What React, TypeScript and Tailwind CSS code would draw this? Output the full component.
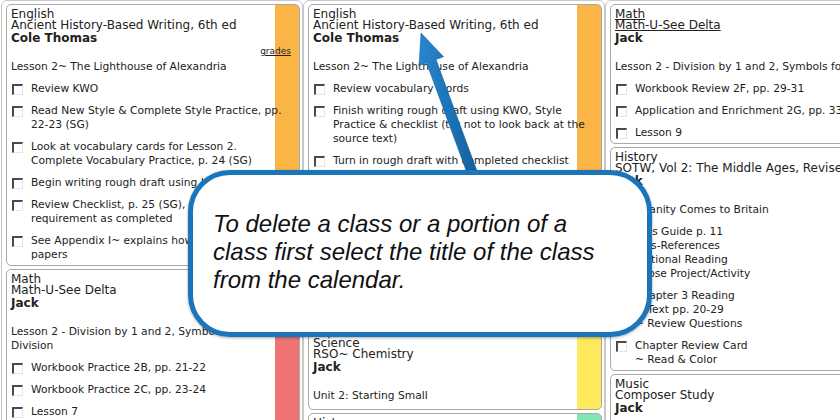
import React from "react"

type Item = { text: string; plain?: boolean }

type CardData = {
  subject: string
  course: string
  student: string
  link?: boolean
  grades?: boolean
  lesson: string
  items: Item[]
  strip: string
  pb?: string
}

const col1: CardData[] = [
  {
    subject: "English",
    course: "Ancient History-Based Writing, 6th ed",
    student: "Cole Thomas",
    grades: true,
    lesson: "Lesson 2~ The Lighthouse of Alexandria",
    strip: "bg-[linear-gradient(to_left,#fbb446_24px,#ffffff_24px)]",
    items: [
      { text: "Review KWO" },
      { text: "Read New Style & Complete Style Practice, pp.\n22-23 (SG)" },
      { text: "Look at vocabulary cards for Lesson 2.\nComplete Vocabulary Practice, p. 24 (SG)" },
      { text: "Begin writing rough draft using KWO" },
      { text: "Review Checklist, p. 25 (SG), check off each\nrequirement as completed" },
      { text: "See Appendix I~ explains how to format your\npapers" },
    ],
  },
  {
    subject: "Math",
    course: "Math-U-See Delta",
    student: "Jack",
    lesson: "Lesson 2 - Division by 1 and 2, Symbols for\nDivision",
    strip: "bg-[linear-gradient(to_left,#f07272_24px,#ffffff_24px)]",
    items: [
      { text: "Workbook Practice 2B, pp. 21-22" },
      { text: "Workbook Practice 2C, pp. 23-24" },
      { text: "Lesson 7" },
      { text: "Lesson 8" },
    ],
  },
]

const col2: CardData[] = [
  {
    subject: "English",
    course: "Ancient History-Based Writing, 6th ed",
    student: "Cole Thomas",
    lesson: "Lesson 2~ The Lighthouse of Alexandria",
    strip: "bg-[linear-gradient(to_left,#fbb446_24px,#ffffff_24px)]",
    items: [
      { text: "Review vocabulary words" },
      { text: "Finish writing rough draft using KWO, Style\nPractice & checklist (try not to look back at the\nsource text)" },
      { text: "Turn in rough draft with completed checklist" },
      { text: "Begin writing final draft using rough\ndraft and checklist" },
      { text: "Complete Style Practice, p. 26 (SG)" },
      { text: "Look at vocabulary cards for Lessons 1\nand 2. Take Vocabulary Quiz 1, p. 27\n(SG)" },
      { text: "Turn in final draft with completed\nchecklist; see Appendix I for grading\nhelp" },
    ],
  },
  {
    subject: "Science",
    course: "RSO~ Chemistry",
    student: "Jack",
    lesson: "Unit 2: Starting Small",
    strip: "bg-[linear-gradient(to_left,#fde95b_24px,#ffffff_24px)]",
    items: [],
    pb: "pb-[6px]",
  },
  {
    subject: "History",
    course: "SOTW, Vol 2: The Middle Ages",
    student: "Cole Thomas",
    lesson: "Chapter 2~ Christianity Comes to Britain",
    strip: "bg-[linear-gradient(to_left,#7fe6b4_24px,#ffffff_24px)]",
    items: [{ text: "Read Chapter 2" }],
  },
]

const col3: CardData[] = [
  {
    subject: "Math",
    course: "Math-U-See Delta",
    student: "Jack",
    link: true,
    lesson: "Lesson 2 - Division by 1 and 2, Symbols for Division",
    strip: "bg-[linear-gradient(to_left,#f07272_24px,#ffffff_24px)]",
    items: [
      { text: "Workbook Review 2F, pp. 29-31" },
      { text: "Application and Enrichment 2G, pp. 33-35" },
      { text: "Lesson 9" },
    ],
  },
  {
    subject: "History",
    course: "SOTW, Vol 2: The Middle Ages, Revised Edition",
    student: "Jack",
    lesson: "Christianity Comes to Britain",
    strip: "bg-[linear-gradient(to_left,#7fe6b4_24px,#ffffff_24px)]",
    items: [
      { text: "Parent's Guide p. 11\n~ Cross-References\n~ Additional Reading\n~ Choose Project/Activity", plain: true },
      { text: "Chapter 3 Reading\n~ Text pp. 20-29\n~ Review Questions" },
      { text: "Chapter Review Card\n~ Read & Color" },
    ],
  },
  {
    subject: "Music",
    course: "Composer Study",
    student: "Jack",
    lesson: "Week 2~ Listen and Narrate",
    strip: "bg-[linear-gradient(to_left,#b79ce8_24px,#ffffff_24px)]",
    items: [],
  },
]

function Checkbox() {
  return <span className="mt-[2px] ml-[1px] mr-[8px] h-[11px] w-[11px] shrink-0 border-l-2 border-t-2 border-r border-b border-l-[#4a4a4a] border-t-[#4a4a4a] border-r-[#e4e4e4] border-b-[#e4e4e4]" />
}

function Card({ c }: { c: CardData }) {
  return (
    <div className={`rounded-[5px] border border-[#a9a9a9] pl-[4px] pr-[12px] pt-[4px] ${c.pb ?? "pb-[3px]"} ${c.strip}`}>
      <div className={`text-[12px] leading-[11px] ${c.link ? "underline" : ""}`}>
        <div>{c.subject}</div>
        <div className="whitespace-nowrap">{c.course}</div>
      </div>
      <div className="text-[12px] font-bold leading-[14px]">{c.student}</div>
      <div className="-mr-[4px] h-[12px] text-right text-[9px] leading-[12px]">
        {c.grades && <span className="underline">grades</span>}
      </div>
      <div className="mt-[3px] whitespace-pre text-[10.7px] leading-[14px]">{c.lesson}</div>
      {c.items.length > 0 && (
        <div className="mt-[8px] flex flex-col gap-[8px]">
          {c.items.map((it, i) => (
            <div key={i} className="flex">
              {!it.plain && <Checkbox />}
              <div className="whitespace-pre text-[10.7px] leading-[14px]">{it.text}</div>
            </div>
          ))}
        </div>
      )}
    </div>
  )
}

function Column({ cards }: { cards: CardData[] }) {
  return (
    <div className="flex w-[302px] shrink-0 flex-col gap-[3px] rounded-[6px] border border-[#c8c8c8] pl-[4px] pr-[2px] pt-[3px]">
      {cards.map((c, i) => (
        <Card key={i} c={c} />
      ))}
    </div>
  )
}

export default function App() {
  return (
    <div className="relative h-[420px] w-[840px] overflow-hidden bg-white font-['DejaVu_Sans',Verdana,sans-serif] text-[#222]">
      <div className="flex pl-[1px]">
        <Column cards={col1} />
        <Column cards={col2} />
        <Column cards={col3} />
      </div>

      {/* arrow pointing at the class title */}
      <svg className="pointer-events-none absolute left-0 top-0" width="840" height="420" viewBox="0 0 840 420">
        <defs>
          <linearGradient id="shaft" x1="0" y1="0" x2="1" y2="0">
            <stop offset="0" stopColor="#2a86cc" />
            <stop offset="0.5" stopColor="#1b75bb" />
            <stop offset="1" stopColor="#15609c" />
          </linearGradient>
        </defs>
        <polygon
          points="421,33 443.5,56.7 436,59.5 476.7,170.3 467.3,173.7 426.6,62.9 419.1,65.7"
          fill="url(#shaft)"
          stroke="#16629f"
          strokeWidth="0.6"
          strokeLinejoin="round"
        />
      </svg>

      <div className="absolute left-[188px] top-[170px] flex h-[167px] w-[464px] items-center rounded-[42px] border-[5px] border-[#1b75bb] bg-white pb-[4px] pl-[20px] shadow-[0_1px_3px_rgba(0,0,0,0.35)]">
        <p className="w-[410px] font-['Liberation_Sans',Arial,sans-serif] text-[24px] italic leading-[28px] text-[#111]">
          To delete a class or a portion of a
          <br />
          class first select the title of the class
          <br />
          from the calendar.
        </p>
      </div>
    </div>
  )
}
